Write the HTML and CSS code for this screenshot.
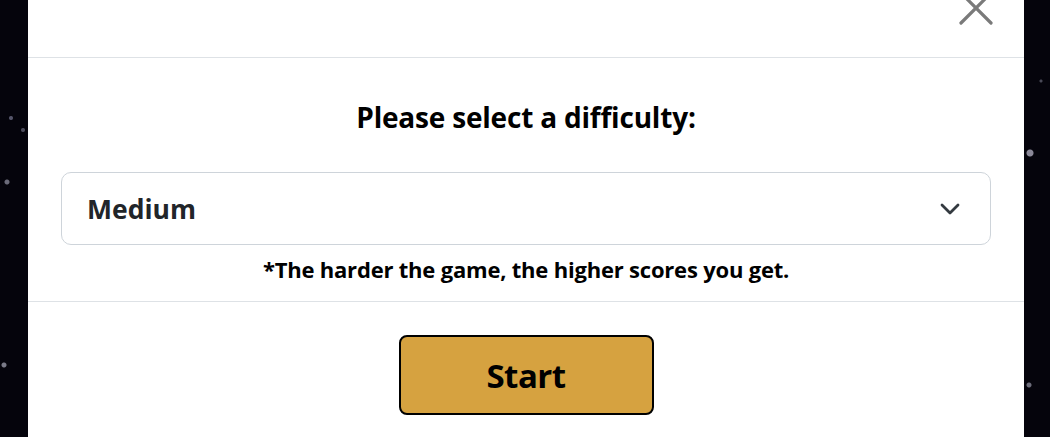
FILE: index.html
```html
<!DOCTYPE html>
<html>
<head>
<meta charset="utf-8">
<link rel="stylesheet" href="styles.css">
</head>
<body>
<div class="modal">
  <div class="modal-header">
    <button class="close" aria-label="Close">
      <svg width="34" height="34" viewBox="0 0 34 34"><path d="M2 2 L32 32 M32 2 L2 32" stroke="#7a7a7a" stroke-width="3.2" stroke-linecap="round"/></svg>
    </button>
  </div>
  <div class="modal-body">
    <h2 class="title">Please select a difficulty:</h2>
    <div class="select">
      <span class="select-value">Medium</span>
      <svg class="chevron" width="20" height="12" viewBox="0 0 20 12"><path d="M2 2 L10 10 L18 2" fill="none" stroke="#343a40" stroke-width="2.8" stroke-linecap="round" stroke-linejoin="round"/></svg>
    </div>
    <p class="note">*The harder the game, the higher scores you get.</p>
  </div>
  <div class="modal-footer">
    <button class="start">Start</button>
  </div>
</div>
</body>
</html>
```
FILE: styles.css
```css
html, body {
  margin: 0;
  padding: 0;
  height: 100%;
  overflow: hidden;
}
body {
  background-color: #05040c;
  background-image:
    radial-gradient(circle at 1030px 153px, #8a8898 0 3px, transparent 4px),
    radial-gradient(circle at 7px 182px, #6b6b7a 0 2px, transparent 3px),
    radial-gradient(circle at 11px 118px, #55556a 0 1.5px, transparent 2.5px),
    radial-gradient(circle at 4px 365px, #7a7a88 0 2px, transparent 3px),
    radial-gradient(circle at 1029px 385px, #6c6c7a 0 2px, transparent 3px),
    radial-gradient(circle at 23px 130px, #4c4c5c 0 1.5px, transparent 2.5px),
    radial-gradient(circle at 1041px 81px, #4a4a58 0 1px, transparent 2px);
  background-repeat: no-repeat;
  background-size: 1050px 437px;
  font-family: "Open Sans", "Liberation Sans", sans-serif;
  display: flex;
  justify-content: center;
}
.modal {
  width: 996px;
  margin-left: 2px;
  background: #fff;
  display: flex;
  flex-direction: column;
  height: 100%;
}
.modal-header {
  height: 57px;
  border-bottom: 1px solid #dee2e6;
  display: flex;
  justify-content: flex-end;
  align-items: flex-start;
  padding-right: 31px;
}
.close {
  background: none;
  border: 0;
  padding: 0;
  margin-top: -9px;
  cursor: pointer;
  line-height: 0;
}
.modal-body {
  padding: 40px 33px 17px;
  border-bottom: 1px solid #dee2e6;
  display: flex;
  flex-direction: column;
  align-items: center;
}
.title {
  margin: 0;
  font-size: 28px;
  font-weight: 700;
  color: #000;
  line-height: 38px;
  letter-spacing: -0.2px;
}
.select {
  margin-top: 36px;
  align-self: stretch;
  height: 71px;
  border: 1px solid #ced4da;
  border-radius: 10px;
  display: flex;
  align-items: center;
  justify-content: space-between;
  padding: 0 30px 0 25px;
}
.select-value {
  font-size: 26.5px;
  font-weight: 700;
  color: #212529;
}
.chevron {
  display: block;
}
.note {
  margin: 9px 0 0;
  font-size: 22px;
  font-weight: 700;
  color: #000;
  line-height: 30px;
  letter-spacing: -0.2px;
}
.modal-footer {
  display: flex;
  justify-content: center;
  padding-top: 33px;
}
.start {
  width: 255px;
  height: 80px;
  background: #d6a240;
  border: 2px solid #000;
  border-radius: 8px;
  font-family: "Open Sans", "Liberation Sans", sans-serif;
  font-size: 33px;
  font-weight: 700;
  color: #000;
  letter-spacing: -0.5px;
}
```
